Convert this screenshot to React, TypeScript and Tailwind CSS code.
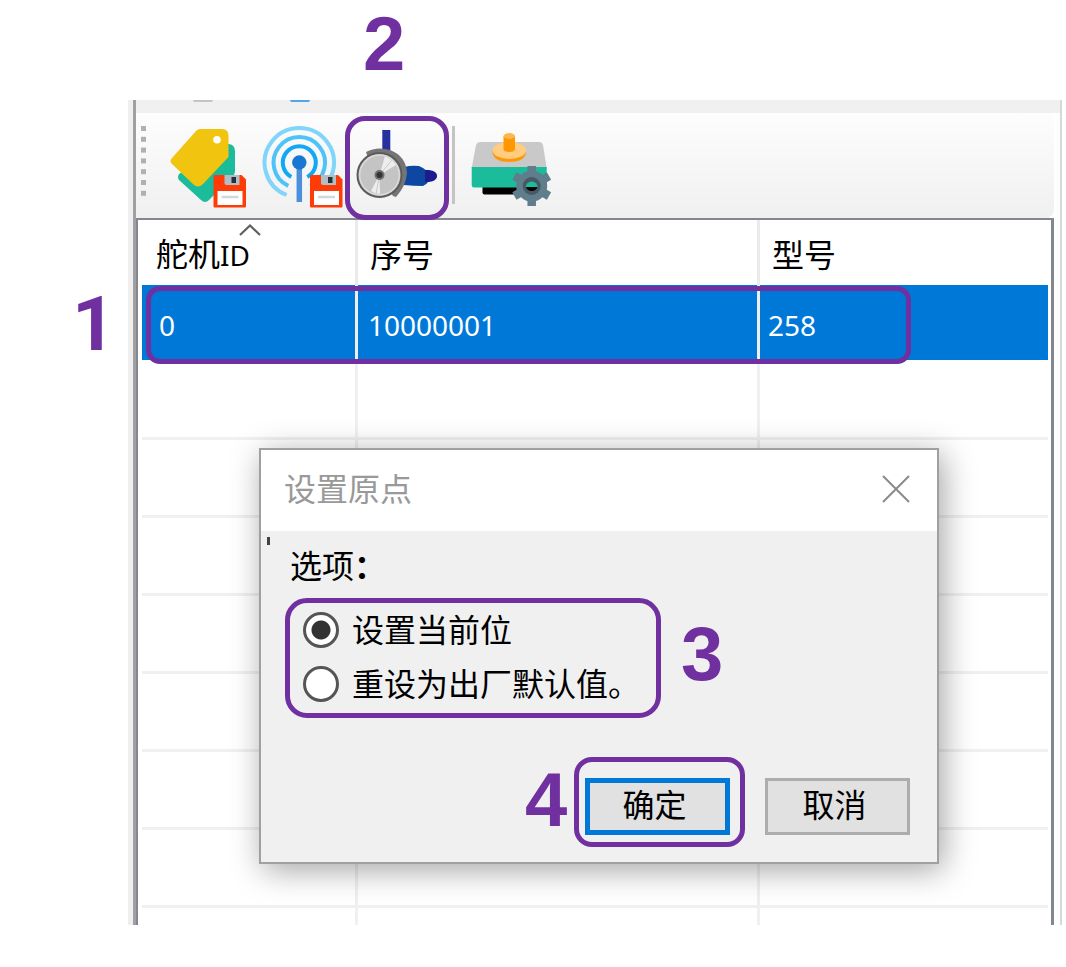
import React, { useState } from 'react';

const columns = ['舵机ID', '序号', '型号'];

const servos = [{ id: '0', serial: '10000001', model: '258' }];

const emptyRows = [1, 2, 3, 4, 5, 6];

const originOptions = [
  { value: 'current', label: '设置当前位' },
  { value: 'factory', label: '重设为出厂默认值。' }
];

function Floppy() {
  return (
    <g>
      <path d="M1 0H28L32.5 4.5V31.5a1 1 0 0 1-1 1H1a1 1 0 0 1-1-1V1a1 1 0 0 1 1-1z" fill="#ff3c08" />
      <path d="M11 0h15v10H13q-2 0-2-2z" fill="#b0bec5" />
      <rect x="18" y="2" width="4.5" height="6" fill="#263238" />
      <rect x="4" y="16" width="25" height="14" fill="#fff" />
      <path d="M8 22h17" stroke="#cfd8dc" strokeWidth="2.5" />
    </g>
  );
}

function TagIcon() {
  return (
    <svg viewBox="0 0 82 82" className="w-[82px] h-[82px]">
      <path d="M58 18H61Q67 19 67 25V45Q67 48 65 50L41 74Q37 78 33 74L11 54Q9 51 11 48z" fill="#1abc9c" />
      <path d="M32 3H54Q60.500 3 60.500 10V31L35 58Q30 63 25 58L4 38Q1 35 4 32L28 5Q30 3 32 3z" fill="#f1c40f" />
      <circle cx="49" cy="13.700" r="3.800" fill="#fff" />
      <g transform="translate(45.500 49)"><Floppy /></g>
    </svg>
  );
}

function SignalIcon() {
  return (
    <svg viewBox="0 0 82 82" className="w-[82px] h-[82px]">
      <g fill="none" strokeWidth="4">
        <path d="M24.600 69A34.700 34.700 0 1 1 50 69" stroke="#81d4fa" />
        <path d="M26.300 59.900A25.700 25.700 0 1 1 48.300 59.900" stroke="#4fc3f7" />
        <path d="M29.300 51.100A16.500 16.500 0 1 1 45.300 51.100" stroke="#12a8f3" />
      </g>
      <path d="M37.300 36V76" stroke="#4a90dc" strokeWidth="5.500" />
      <circle cx="37.300" cy="36.500" r="7.200" fill="#1976d2" />
      <g transform="translate(48 49)"><Floppy /></g>
    </svg>
  );
}

function EncoderIcon() {
  return (
    <svg viewBox="0 0 82 82" className="w-[82px] h-[82px]">
      <rect x="26.300" y="4" width="8" height="22" fill="#27309f" />
      <path d="M48 41q8-2 15-1q5 2 8 5q9 0 10 5q-1 5-8 5q-3 4-6 5q-9 0-19-1z" fill="#0d47a1" />
      <path d="M69 44h4q8 1 8 6t-8 6h-4z" fill="#1c1c8f" />
      <path d="M10 26Q21 20 34 24Q50 30 51 47Q50 60 40 71L37 70L34 65L12 32z" fill="#757575" />
      <circle cx="23.500" cy="49" r="22" fill="#c4c4c4" stroke="#5c5c5c" strokeWidth="2" />
      <path d="M23.500 49L29 30Q36 33 40 39z" fill="#ededed" />
      <path d="M23.500 49L15 65Q19 68 24 68z" fill="#eee" />
      <path d="M23.500 49L36 34M23.500 49L20 68" stroke="#c9c9c9" strokeWidth="1" />
      <circle cx="23.500" cy="49" r="19.800" fill="none" stroke="#ddd" strokeWidth="1.200" />
      <circle cx="23.500" cy="49" r="5" fill="#6e6e6e" />
      <circle cx="23.500" cy="49" r="3" fill="#333" />
    </svg>
  );
}

function ServoSettingsIcon() {
  return (
    <svg viewBox="0 0 82 82" className="w-[82px] h-[82px]">
      <rect x="11.500" y="58" width="52" height="10.500" rx="2" fill="#000" />
      <path d="M10 16H68Q71 16 72 19L75.700 42H.700L5 19Q6 16 10 16z" fill="#c9c9c9" />
      <path d="M.700 41H75.700V59Q75.700 61.500 73 61.500H3Q.700 61.500 .700 59z" fill="#1abc9c" />
      <path d="M21.500 24h33.500v3q-2 9-16.700 9t-16.800-9z" fill="#ff9800" />
      <ellipse cx="38.300" cy="24.500" rx="16.700" ry="8.500" fill="#ffcc80" />
      <path d="M32.500 10h11.500v13q0 3-5.700 3t-5.800-3z" fill="#ff9800" />
      <ellipse cx="38.300" cy="10" rx="5.700" ry="3" fill="#ffb74d" />
      <g stroke="#607d8b" strokeWidth="8.500">
        <path d="M60.700 40V80M43.400 50L78 70M43.400 70L78 50" />
      </g>
      <circle cx="60.700" cy="60" r="11" fill="none" stroke="#607d8b" strokeWidth="9" />
      <circle cx="60.700" cy="60" r="9" fill="#455a64" />
      <path d="M54.700 61.500a6 6 0 1 1 12 0z" fill="#1abc9c" />
      <path d="M54.900 61h11.600q-1.500 4-5.800 4t-5.800-4z" fill="#000" />
    </svg>
  );
}

function Grip() {
  return (
    <svg viewBox="0 0 6 70" className="w-1.5 h-[70px]">
      {[0, 1, 2, 3, 4, 5, 6].map((dot) => (
        <rect key={dot} x="0" y={dot * 10.8} width="5" height="5" fill="#b0b0b0" />
      ))}
    </svg>
  );
}

export default function App() {
  const [origin, setOrigin] = useState('current');

  return (
    <main className="relative bg-white pt-[100px] pb-[42px] pl-32 pr-1 font-['Noto_Sans','Noto_Sans_CJK_SC',sans-serif] text-black">
      {/* Main window */}
      <div className="relative border-l-[5px] border-l-[#efefef] border-r-2 border-r-[#d8d8d8]">
        <div className="border-l-[3px] border-[#a0a0a0]">
          {/* Bottom edge of the upper toolbar */}
          <div className="h-[13px] bg-[#f0f0f0] pl-[57px] flex gap-[77px]">
            <span className="w-5 h-0.5 rounded-b bg-[#c4c4c4]" />
            <span className="w-5 h-0.5 rounded-b bg-[#55a5ea]" />
          </div>

          {/* Toolbar */}
          <div className="h-[105px] mr-1.5 pt-[13px] pl-[5px] pr-2 flex items-start rounded-r-lg bg-linear-to-b from-[#fdfdfd] to-[#f0f0f0]">
            <Grip />
            <div className="pl-[21px] flex gap-3">
              <button aria-label="保存标签"><TagIcon /></button>
              <button aria-label="保存通信"><SignalIcon /></button>
              <button aria-label="设置原点" className="relative">
                <EncoderIcon />
                <span className="absolute -inset-x-[11px] -top-2.5 -bottom-3 border-[5px] border-[#7030a0] rounded-[20px] z-10" />
              </button>
            </div>
            <div className="ml-[14px] mr-4 w-[3px] h-[78px] bg-[#c4c4c4]" />
            <button aria-label="舵机设置"><ServoSettingsIcon /></button>
          </div>

          {/* Servo list */}
          <div className="relative mr-1.5 pl-1 pr-[3px] bg-white border-t-2 border-l-2 border-r-[3px] border-[#828790]">
            <table className="w-full table-fixed border-separate border-spacing-0">
              <colgroup>
                <col className="w-[216px]" />
                <col className="w-[402px]" />
                <col />
              </colgroup>
              <thead>
                <tr className="h-[65px]">
                  {columns.map((column, index) => (
                    <th
                      key={column}
                      className="relative p-0 pl-3 pt-1 first:pl-3.5 text-left font-normal text-[32px] leading-10 border-r-[3px] border-[#ebebeb] last:border-r-0"
                    >
                      {index === 0 ? <>舵机<span className="text-[28px]">ID</span></> : column}
                      {index === 0 && (
                        <svg viewBox="0 0 22 12" className="absolute top-1 left-[97px] w-[22px] h-3">
                          <path d="M1 11L11 1.500L21 11" fill="none" stroke="#606060" strokeWidth="2.200" />
                        </svg>
                      )}
                    </th>
                  ))}
                </tr>
              </thead>
              <tbody>
                {servos.map((servo) => (
                  <tr key={servo.id} className="h-[75px] bg-[#0078d7] text-white text-[28px] leading-10">
                    <td className="p-0 pl-[17px] pt-1 border-r-[3px] border-[#eee]">{servo.id}</td>
                    <td className="p-0 pl-2.5 pt-1 border-r-[3px] border-[#eee]">{servo.serial}</td>
                    <td className="p-0 pl-2 pt-1">{servo.model}</td>
                  </tr>
                ))}
                <tr className="h-20">
                  <td className="p-0 border-r-[3px] border-b-[3px] border-[#f0f0f0]" />
                  <td className="p-0 border-r-[3px] border-b-[3px] border-[#f0f0f0]" />
                  <td className="p-0 border-b-[3px] border-[#f0f0f0]" />
                </tr>
                {emptyRows.map((row) => (
                  <tr key={row} className="h-[78px]">
                    <td className="p-0 border-r-[3px] border-b-[3px] border-[#f0f0f0]" />
                    <td className="p-0 border-r-[3px] border-b-[3px] border-[#f0f0f0]" />
                    <td className="p-0 border-b-[3px] border-[#f0f0f0]" />
                  </tr>
                ))}
                <tr className="h-[17px]">
                  <td className="p-0 border-r-[3px] border-[#f0f0f0]" />
                  <td className="p-0 border-r-[3px] border-[#f0f0f0]" />
                  <td className="p-0" />
                </tr>
              </tbody>
            </table>
            <div className="absolute top-[66px] left-2 w-[765px] h-[78px] border-[5px] border-[#7030a0] rounded-[14px]" />
          </div>
        </div>

        {/* Origin dialog */}
        <div
          role="dialog"
          aria-labelledby="dialog-title"
          className="absolute top-[348px] left-[126px] w-[680px] border-2 border-[#a0a0a0] bg-[#f0f0f0] shadow-[4px_6px_30px_rgba(0,0,0,0.36)]"
        >
          <div className="h-[81px] pb-1 pl-[23px] pr-[27px] flex items-center justify-between bg-white">
            <h1 id="dialog-title" className="text-[32px] leading-10 text-[#999999]">设置原点</h1>
            <button aria-label="关闭">
              <svg viewBox="0 0 28 28" className="w-7 h-7">
                <path d="M1 1L27 27M27 1L1 27" stroke="#8a8a8a" strokeWidth="2" />
              </svg>
            </button>
          </div>
          <span className="absolute top-[87px] left-1.5 w-[3px] h-2 bg-[#444]" />

          <form className="pt-3.5 pb-[27px] pl-[24px] pr-[27px]" onSubmit={(e) => e.preventDefault()}>
            <fieldset>
              <legend className="pl-[5px] text-[32px] leading-[42px]">选项<span className="font-bold">：</span></legend>
              <div className="mt-[11px] w-[376px] h-[120px] pl-[13px] border-[5px] border-[#7030a0] rounded-[22px]">
                {originOptions.map((option) => (
                  <label key={option.value} className="flex items-center gap-[13px] h-[54px] text-[32px] leading-10">
                    <input
                      type="radio"
                      name="origin"
                      value={option.value}
                      checked={origin === option.value}
                      onChange={() => setOrigin(option.value)}
                      className="appearance-none shrink-0 w-9 h-9 rounded-full border-[3px] border-[#555] bg-white checked:bg-[radial-gradient(circle,#333_9px,#fff_10px)]"
                    />
                    {option.label}
                  </label>
                ))}
              </div>
            </fieldset>
            <div className="mt-[60px] flex justify-end gap-[35px]">
              <div className="relative">
                <button
                  type="submit"
                  className="block w-[145px] h-[57px] pr-1.5 pb-1 bg-[#e1e1e1] border-[5px] border-[#0078d7] text-[32px] leading-10"
                >
                  确定
                </button>
                <span className="pointer-events-none absolute -left-[11px] -right-[15px] -top-[21px] -bottom-3 border-[5px] border-[#7030a0] rounded-[18px]" />
              </div>
              <button
                type="button"
                className="w-[145px] h-[57px] pr-1.5 pb-1 bg-[#e1e1e1] border-[3px] border-[#adadad] text-[32px] leading-10"
              >
                取消
              </button>
            </div>
          </form>
        </div>
      </div>

      {/* Step numbers */}
      <div className="font-['Liberation_Sans',sans-serif] font-bold text-[76px] leading-20 text-[#7030a0]">
        <span className="absolute top-[284px] left-[72px] font-['Roboto',sans-serif]">1</span>
        <span className="absolute top-1 left-[363px]">2</span>
        <span className="absolute top-[614px] left-[681px]">3</span>
        <span className="absolute top-[760px] left-[525px]">4</span>
      </div>
    </main>
  );
}
